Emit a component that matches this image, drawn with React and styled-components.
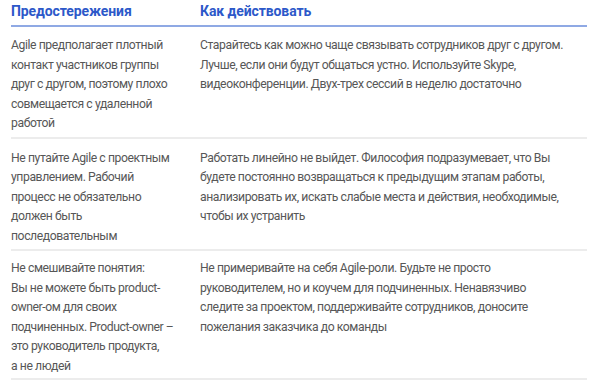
import React from "react";
import styled, { createGlobalStyle } from "styled-components";

const Global = createGlobalStyle`
  html, body { margin: 0; padding: 0; background: #fff; }
  body { font-family: Roboto, "Liberation Sans", sans-serif; }
`;

const Table = styled.div`
  width: 576px;
  margin-left: 11px;
  display: flex;
  flex-direction: column;
`;

const HeadRow = styled.div`
  display: grid;
  grid-template-columns: 189px 1fr;
  border-bottom: 2px solid #8fa9e4;
  padding: 3px 0 5px;
`;

const HeadCell = styled.div`
  font-size: 14px;
  font-weight: 700;
  letter-spacing: -0.1px;
  color: #2c58c9;
  line-height: 17px;
`;

const Row = styled.div`
  display: grid;
  grid-template-columns: 189px 1fr;
  border-bottom: 2px solid #ececec;
  padding: ${(p) => p.$pt}px 0 ${(p) => p.$pb}px;
`;

const Cell = styled.div`
  font-size: 12.2px;
  letter-spacing: -0.42px;
  line-height: 19.5px;
  color: #575757;
  white-space: nowrap;
`;

const rows = [
  {
    pt: 9, pb: 3,
    a: ["Agile предполагает плотный", "контакт участников группы", "друг с другом, поэтому плохо", "совмещается с удаленной", "работой"],
    b: ["Старайтесь как можно чаще связывать сотрудников друг с другом.", "Лучше, если они будут общаться устно. Используйте Skype,", "видеоконференции. Двух-трех сессий в неделю достаточно"],
  },
  {
    pt: 10, pb: 3,
    a: ["Не путайте Agile с проектным", "управлением. Рабочий", "процесс не обязательно", "должен быть", "последовательным"],
    b: ["Работать линейно не выйдет. Философия подразумевает, что Вы", "будете постоянно возвращаться к предыдущим этапам работы,", "анализировать их, искать слабые места и действия, необходимые,", "чтобы их устранить"],
  },
  {
    pt: 8, pb: 2,
    a: ["Не смешивайте понятия:", "Вы не можете быть product-", "owner-ом для своих", "подчиненных. Product-owner –", "это руководитель продукта,", "а не людей"],
    b: ["Не примеривайте на себя Agile-роли. Будьте не просто", "руководителем, но и коучем для подчиненных. Ненавязчиво", "следите за проектом, поддерживайте сотрудников, доносите", "пожелания заказчика до команды"],
  },
];

const Lines = ({ lines }) => (
  <Cell>
    {lines.map((l, i) => (
      <React.Fragment key={i}>
        {l}
        {i < lines.length - 1 && <br />}
      </React.Fragment>
    ))}
  </Cell>
);

export default function App() {
  return (
    <>
      <Global />
      <Table>
        <HeadRow>
          <HeadCell>Предостережения</HeadCell>
          <HeadCell>Как действовать</HeadCell>
        </HeadRow>
        {rows.map((r, i) => (
          <Row key={i} $pt={r.pt} $pb={r.pb}>
            <Lines lines={r.a} />
            <Lines lines={r.b} />
          </Row>
        ))}
      </Table>
    </>
  );
}
